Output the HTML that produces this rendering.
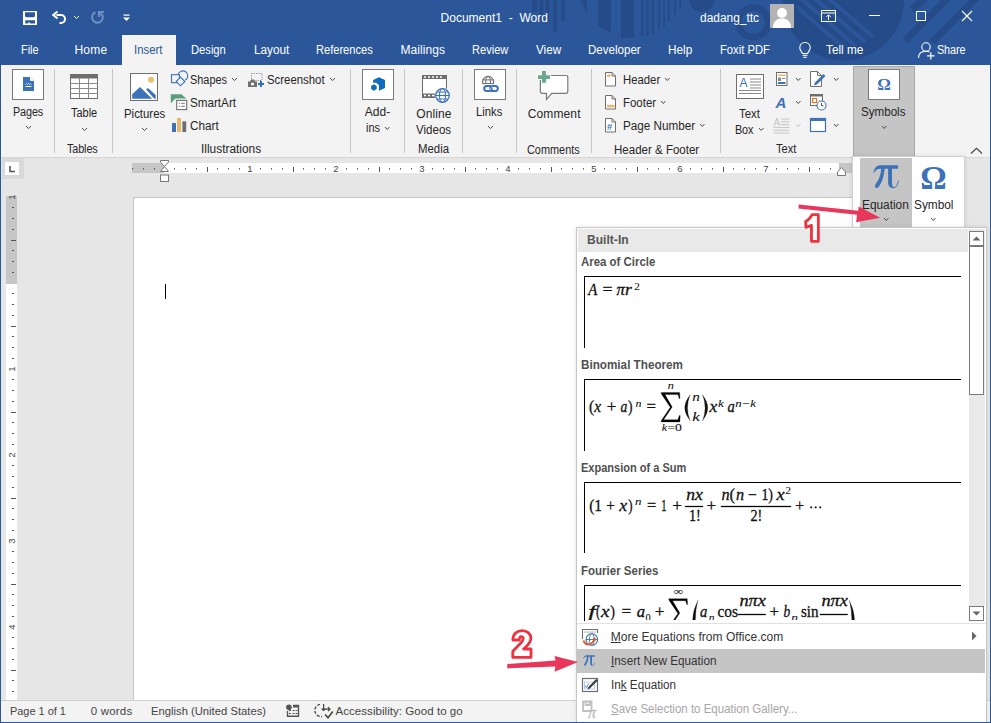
<!DOCTYPE html><html><head><meta charset="utf-8"><style>
html,body{margin:0;padding:0;}
body{width:991px;height:723px;overflow:hidden;position:relative;background:#e6e6e6;font-family:"Liberation Sans",sans-serif;}
.t{position:absolute;white-space:nowrap;font-family:"Liberation Sans",sans-serif;}
svg{overflow:visible}
u{text-decoration:underline;text-underline-offset:1px}
</style></head><body>
<div style="position:absolute;left:0px;top:0px;width:991px;height:65px;background:#2b579a"></div>
<svg style="position:absolute;left:0px;top:0px;" width="991" height="65" viewBox="0 0 991 65">
<g fill="#254c89">
<rect x="532.3" y="0" width="5" height="12"/><rect x="539.4" y="0" width="4" height="22"/><rect x="545.4" y="0" width="4" height="22"/><rect x="553" y="0" width="4" height="32"/>
<rect x="561" y="0" width="4" height="21"/>
<polygon points="580,0 587,0 587,13"/>
<polygon points="598,0 611,0 611,33 598,26"/>
<rect x="621" y="0" width="13" height="38"/>
<rect x="641" y="0" width="2.5" height="37"/>
<rect x="646" y="0" width="2.5" height="36"/>
<rect x="652" y="0" width="2" height="34"/>
<rect x="658" y="0" width="2" height="31"/>
<rect x="663" y="0" width="2" height="27"/>
<rect x="668" y="0" width="2" height="22"/>
<rect x="674" y="0" width="2" height="15"/>
<rect x="679" y="0" width="2" height="9"/><circle cx="702" cy="-1" r="13"/>
</g>
<g fill="none" stroke="#254c89">

<circle cx="753.3" cy="22.4" r="14.8" stroke-width="6.7"/>
</g>
<defs><clipPath id="uc"><circle cx="843.5" cy="0" r="47"/></clipPath></defs>
<circle cx="843.5" cy="0" r="60.5" fill="#254c89"/>
<g clip-path="url(#uc)" stroke="#2b579a" stroke-width="3.6">
<line x1="785" y1="-3" x2="858" y2="60"/>
<line x1="799" y1="-3" x2="872" y2="60"/>
<line x1="813" y1="-3" x2="886" y2="60"/>
<line x1="827" y1="-3" x2="900" y2="60"/>
</g>
<g stroke="#254c89" stroke-width="7">
<line x1="927" y1="-4" x2="912" y2="10"/>
<line x1="950" y1="-4" x2="905" y2="41"/>
<line x1="978" y1="-4" x2="932" y2="42"/>
</g>
</svg>
<div style="position:absolute;left:122px;top:35px;width:54px;height:30px;background:#f3f3f3"></div>
<div style="position:absolute;left:0px;top:65px;width:991px;height:92px;background:#f3f3f3"></div>
<div style="position:absolute;left:0px;top:157px;width:991px;height:1px;background:#d6d6d6"></div>
<div style="position:absolute;left:0px;top:158px;width:991px;height:542px;background:#e6e6e6"></div>
<div style="position:absolute;left:0px;top:700px;width:991px;height:1px;background:#cfcfcf"></div>
<div style="position:absolute;left:0px;top:701px;width:991px;height:22px;background:#f3f3f3"></div>
<svg style="position:absolute;left:22px;top:10px;" width="16" height="16" viewBox="0 0 16 16"><path fill-rule="evenodd" fill="#fff" d="M1,1 H15 V15 H1 Z M3,2.3 V6.3 L4,7.3 H12 L13,6.3 V2.3 Z M3.3,10.2 V13.6 H6 V12.5 H8 V13.6 H13 V10.2 Z"/></svg>
<svg style="position:absolute;left:51px;top:10px;" width="17" height="16" viewBox="0 0 17 16"><path d="M5.5,5 H10 A4,4 0 0 1 10,13 H8.5" fill="none" stroke="#fff" stroke-width="2"/><path d="M6.5,1.5 L2.3,5 L6.5,8.5" fill="none" stroke="#fff" stroke-width="2.1"/></svg>
<svg style="position:absolute;left:72.5px;top:15.0px;" width="7" height="4.6" viewBox="0 0 7 4.6"><polyline points="1,1 3.5,3.6 6,1" fill="none" stroke="#fff" stroke-width="0.95"/></svg>
<svg style="position:absolute;left:89px;top:10px;" width="17" height="16" viewBox="0 0 17 16"><path d="M6.6,2.2 A5.4,5.4 0 1 0 13.4,5.2" fill="none" stroke="#6f8fc2" stroke-width="2"/><path d="M15,2 H9.9 V7 M10,2 L13.8,6" fill="none" stroke="#6f8fc2" stroke-width="2"/></svg>
<svg style="position:absolute;left:122px;top:13px;" width="9" height="10" viewBox="0 0 9 10"><rect x="1.5" y="1.5" width="6" height="1.2" fill="#fff"/><polygon points="1,4.5 8,4.5 4.5,8" fill="#fff"/></svg>
<div class="t" style="left:440.5px;top:11.5px;font-size:12px;line-height:13.80px;letter-spacing:0.020px;color:#fff;transform:scaleX(1.0000);transform-origin:0 0;">Document1&nbsp; -&nbsp; Word</div>
<div class="t" style="left:700.0px;top:11.5px;font-size:12px;line-height:13.80px;letter-spacing:0.000px;color:#fff;transform:scaleX(0.9935);transform-origin:0 0;">dadang_ttc</div>
<svg style="position:absolute;left:770px;top:4px;" width="24" height="24" viewBox="0 0 24 24"><rect width="24" height="24" fill="#b3b3b3"/><circle cx="12" cy="9" r="5" fill="#fff"/><path d="M3,24 C3,17 7,14.5 12,14.5 C17,14.5 21,17 21,24 Z" fill="#fff"/></svg>
<svg style="position:absolute;left:821px;top:10px;" width="16" height="13" viewBox="0 0 16 13"><rect x="0.5" y="0.5" width="14" height="11" fill="none" stroke="#fff" stroke-width="1"/><line x1="0.5" y1="3" x2="14.5" y2="3" stroke="#fff"/><path d="M7.5,10 V5 M5.3,7 L7.5,4.8 L9.7,7" fill="none" stroke="#fff" stroke-width="1"/></svg>
<div style="position:absolute;left:869px;top:15px;width:11px;height:1px;background:#fff"></div>
<div style="position:absolute;left:916px;top:11px;width:10px;height:10px;border:1px solid #fff;box-sizing:border-box"></div>
<svg style="position:absolute;left:961px;top:10px;" width="12" height="12" viewBox="0 0 12 12"><path d="M1,1 L11,11 M11,1 L1,11" stroke="#fff" stroke-width="1.1"/></svg>
<div class="t" style="left:21.4px;top:43.9px;font-size:12px;line-height:13.80px;letter-spacing:0.000px;color:#fff;transform:scaleX(0.9102);transform-origin:0 0;">File</div>
<div class="t" style="left:74.4px;top:43.9px;font-size:12px;line-height:13.80px;letter-spacing:0.263px;color:#fff;transform:scaleX(1.0000);transform-origin:0 0;">Home</div>
<div class="t" style="left:190.6px;top:43.9px;font-size:12px;line-height:13.80px;letter-spacing:0.000px;color:#fff;transform:scaleX(0.9316);transform-origin:0 0;">Design</div>
<div class="t" style="left:253.6px;top:43.9px;font-size:12px;line-height:13.80px;letter-spacing:0.000px;color:#fff;transform:scaleX(0.9825);transform-origin:0 0;">Layout</div>
<div class="t" style="left:316.2px;top:43.9px;font-size:12px;line-height:13.80px;letter-spacing:0.000px;color:#fff;transform:scaleX(0.9240);transform-origin:0 0;">References</div>
<div class="t" style="left:400.4px;top:43.9px;font-size:12px;line-height:13.80px;letter-spacing:0.083px;color:#fff;transform:scaleX(1.0000);transform-origin:0 0;">Mailings</div>
<div class="t" style="left:472.1px;top:43.9px;font-size:12px;line-height:13.80px;letter-spacing:0.000px;color:#fff;transform:scaleX(0.9226);transform-origin:0 0;">Review</div>
<div class="t" style="left:535.7px;top:43.9px;font-size:12px;line-height:13.80px;letter-spacing:0.000px;color:#fff;transform:scaleX(0.9731);transform-origin:0 0;">View</div>
<div class="t" style="left:588.0px;top:43.9px;font-size:12px;line-height:13.80px;letter-spacing:0.000px;color:#fff;transform:scaleX(0.9634);transform-origin:0 0;">Developer</div>
<div class="t" style="left:668.3px;top:43.9px;font-size:12px;line-height:13.80px;letter-spacing:0.000px;color:#fff;transform:scaleX(0.9805);transform-origin:0 0;">Help</div>
<div class="t" style="left:720.0px;top:43.9px;font-size:12px;line-height:13.80px;letter-spacing:0.000px;color:#fff;transform:scaleX(0.9355);transform-origin:0 0;">Foxit PDF</div>
<div class="t" style="left:825.7px;top:43.9px;font-size:12px;line-height:13.80px;letter-spacing:0.000px;color:#fff;transform:scaleX(0.9813);transform-origin:0 0;">Tell me</div>
<div class="t" style="left:937.3px;top:43.9px;font-size:12px;line-height:13.80px;letter-spacing:-0.089px;color:#fff;transform:scaleX(0.9000);transform-origin:0 0;">Share</div>
<div class="t" style="left:134.2px;top:43.9px;font-size:12px;line-height:13.80px;letter-spacing:0.000px;color:#2b579a;transform:scaleX(0.9496);transform-origin:0 0;">Insert</div>
<svg style="position:absolute;left:798px;top:41px;" width="14" height="18" viewBox="0 0 14 18"><path d="M7,1.5 C3.8,1.5 1.8,4 1.8,6.8 C1.8,9.3 3.6,10.6 4.4,12.5 L9.6,12.5 C10.4,10.6 12.2,9.3 12.2,6.8 C12.2,4 10.2,1.5 7,1.5 Z" fill="none" stroke="#fff" stroke-width="1.1"/><line x1="4.6" y1="14.3" x2="9.4" y2="14.3" stroke="#fff" stroke-width="1.1"/><line x1="5.3" y1="16.3" x2="8.7" y2="16.3" stroke="#fff" stroke-width="1.1"/></svg>
<svg style="position:absolute;left:917px;top:41px;" width="18" height="18" viewBox="0 0 18 18"><circle cx="9" cy="6" r="4.2" fill="none" stroke="#fff" stroke-width="1.1"/><path d="M1.5,17 C1.5,12.5 4.5,10.3 9,10.3 C10.5,10.3 11.5,10.6 12.5,11.1" fill="none" stroke="#fff" stroke-width="1.1"/><path d="M13.8,11.2 V18.6 M10.1,14.9 H17.5" stroke="#fff" stroke-width="1.2"/></svg>
<div style="position:absolute;left:54px;top:69px;width:1px;height:84px;background:#c6c6c6"></div>
<div style="position:absolute;left:112px;top:69px;width:1px;height:84px;background:#c6c6c6"></div>
<div style="position:absolute;left:350px;top:69px;width:1px;height:84px;background:#c6c6c6"></div>
<div style="position:absolute;left:404px;top:69px;width:1px;height:84px;background:#c6c6c6"></div>
<div style="position:absolute;left:462px;top:69px;width:1px;height:84px;background:#c6c6c6"></div>
<div style="position:absolute;left:516px;top:69px;width:1px;height:84px;background:#c6c6c6"></div>
<div style="position:absolute;left:591px;top:69px;width:1px;height:84px;background:#c6c6c6"></div>
<div style="position:absolute;left:720px;top:69px;width:1px;height:84px;background:#c6c6c6"></div>
<div style="position:absolute;left:12px;top:69px;width:32px;height:31px;background:#fff;border:1px solid #7a7a7a;box-sizing:border-box"></div>
<svg style="position:absolute;left:23px;top:77px;" width="12" height="15" viewBox="0 0 12 15"><path d="M0,0 H7.5 L11,3.5 V14 H0 Z" fill="#3d72b8"/><path d="M7.5,0 V3.5 H11" fill="#fff" stroke="#fff" stroke-width=".8"/><path d="M2.5,7.5 L3.5,6.5 L4.5,7.5 L5.5,6.5 L6.5,7.5 L7.5,6.5 L8.5,7.5" fill="none" stroke="#fff" stroke-width=".8"/><rect x="2.5" y="9" width="6" height="1" fill="#fff"/></svg>
<div class="t" style="left:12.6px;top:105.9px;font-size:12px;line-height:13.80px;letter-spacing:-0.118px;color:#262626;transform:scaleX(0.9000);transform-origin:0 0;">Pages</div>
<svg style="position:absolute;left:24.7px;top:125.2px;" width="7" height="4.6" viewBox="0 0 7 4.6"><polyline points="1,1 3.5,3.6 6,1" fill="none" stroke="#444" stroke-width="0.95"/></svg>
<svg style="position:absolute;left:70px;top:74px;" width="28" height="25" viewBox="0 0 28 25"><rect x="0.5" y="0.5" width="27" height="24" fill="#fff" stroke="#6e6e6e"/><rect x="0" y="0" width="28" height="4.5" fill="#6e6e6e"/><g stroke="#8a8a8a" stroke-width="1"><line x1="9.5" y1="4" x2="9.5" y2="24"/><line x1="18.5" y1="4" x2="18.5" y2="24"/><line x1="0" y1="9.5" x2="28" y2="9.5"/><line x1="0" y1="14.5" x2="28" y2="14.5"/><line x1="0" y1="19.5" x2="28" y2="19.5"/></g></svg>
<div class="t" style="left:70.7px;top:107.4px;font-size:12px;line-height:13.80px;letter-spacing:0.000px;color:#262626;transform:scaleX(0.9133);transform-origin:0 0;">Table</div>
<svg style="position:absolute;left:80.5px;top:126.89999999999999px;" width="7" height="4.6" viewBox="0 0 7 4.6"><polyline points="1,1 3.5,3.6 6,1" fill="none" stroke="#444" stroke-width="0.95"/></svg>
<div class="t" style="left:67.3px;top:143.0px;font-size:12px;line-height:13.80px;letter-spacing:-0.115px;color:#262626;transform:scaleX(0.9000);transform-origin:0 0;">Tables</div>
<div style="position:absolute;left:130px;top:73px;width:28px;height:28px;background:#fff;border:1px solid #6e6e6e;box-sizing:border-box"></div>
<svg style="position:absolute;left:130px;top:73px;" width="28" height="28" viewBox="0 0 28 28"><circle cx="21" cy="6.8" r="3" fill="#e8c070"/><path d="M2.2,21.2 L10,13.9 L22.1,25.7 H2.2 Z" fill="#3d72b8"/><path d="M16.1,16.4 L17.9,15 L25.7,22.1 V25.7 H24.3 Z" fill="#3d72b8"/></svg>
<div class="t" style="left:123.5px;top:107.8px;font-size:12px;line-height:13.80px;letter-spacing:0.000px;color:#262626;transform:scaleX(0.9504);transform-origin:0 0;">Pictures</div>
<svg style="position:absolute;left:140.7px;top:127.1px;" width="7" height="4.6" viewBox="0 0 7 4.6"><polyline points="1,1 3.5,3.6 6,1" fill="none" stroke="#444" stroke-width="0.95"/></svg>
<svg style="position:absolute;left:170px;top:69px;" width="19" height="18" viewBox="0 0 19 18"><rect x="1.5" y="5.7" width="8" height="8" fill="none" stroke="#3d72b8" stroke-width="1.1"/><path d="M8,6 A4.9,4.9 0 1 1 15.3,11" fill="none" stroke="#3d72b8" stroke-width="1.1"/><path d="M10.5,8.1 L14.9,12.5 L10.5,16.8 L6.2,12.5 Z" fill="#f3f3f3" stroke="#3d72b8" stroke-width="1.1"/></svg>
<div class="t" style="left:190.0px;top:74.4px;font-size:12px;line-height:13.80px;letter-spacing:0.000px;color:#262626;transform:scaleX(0.9091);transform-origin:0 0;">Shapes</div>
<svg style="position:absolute;left:230.5px;top:77.0px;" width="7" height="4.6" viewBox="0 0 7 4.6"><polyline points="1,1 3.5,3.6 6,1" fill="none" stroke="#444" stroke-width="0.95"/></svg>
<svg style="position:absolute;left:170px;top:93px;" width="18" height="18" viewBox="0 0 18 18"><path d="M0.8,1.2 H11.5 L16.3,5.4 H5.5 L0.8,10.3 Z" fill="#5a9e80"/><rect x="6.7" y="7.4" width="10" height="9.2" fill="#fff" stroke="#6e6e6e" stroke-width="1.1"/><g fill="#7a7a7a"><rect x="8.8" y="9.8" width="1.2" height="1"/><rect x="11" y="9.8" width="3.8" height="1"/><rect x="8.8" y="12.8" width="1.2" height="1"/><rect x="11" y="12.8" width="3.8" height="1"/></g></svg>
<div class="t" style="left:190.0px;top:96.5px;font-size:12px;line-height:13.80px;letter-spacing:0.000px;color:#262626;transform:scaleX(0.9717);transform-origin:0 0;">SmartArt</div>
<svg style="position:absolute;left:171px;top:117px;" width="16" height="15" viewBox="0 0 16 15"><rect x="1" y="6" width="4" height="9" fill="#3d72b8"/><rect x="6" y="1" width="4" height="14" fill="#e8b86a"/><rect x="11.4" y="4.3" width="3.8" height="10.7" fill="#6e6e6e"/></svg>
<div class="t" style="left:190.0px;top:120.0px;font-size:12px;line-height:13.80px;letter-spacing:0.000px;color:#262626;transform:scaleX(0.9780);transform-origin:0 0;">Chart</div>
<svg style="position:absolute;left:247px;top:72px;" width="19" height="16" viewBox="0 0 19 16"><rect x="4.5" y="1.5" width="10.5" height="7" fill="none" stroke="#6e6e6e" stroke-dasharray="1,1.3" stroke-width="0.9"/><path d="M1,9.5 H3 L4,7.5 H7 L8,9.5 H10 V15 H1 Z" fill="#6e6e6e"/><circle cx="5.5" cy="12" r="1.6" fill="#fff"/><path d="M14,9 V15 M11,12 H17" stroke="#2f6fc0" stroke-width="2"/></svg>
<div class="t" style="left:267.2px;top:73.7px;font-size:12px;line-height:13.80px;letter-spacing:0.000px;color:#262626;transform:scaleX(0.9489);transform-origin:0 0;">Screenshot</div>
<svg style="position:absolute;left:328.5px;top:77.0px;" width="7" height="4.6" viewBox="0 0 7 4.6"><polyline points="1,1 3.5,3.6 6,1" fill="none" stroke="#444" stroke-width="0.95"/></svg>
<div class="t" style="left:201.4px;top:142.9px;font-size:12px;line-height:13.80px;letter-spacing:0.000px;color:#262626;transform:scaleX(0.9902);transform-origin:0 0;">Illustrations</div>
<div style="position:absolute;left:362px;top:69px;width:32px;height:31px;background:#fff;border:1px solid #7a7a7a;box-sizing:border-box"></div>
<svg style="position:absolute;left:369px;top:76px;" width="17" height="16" viewBox="0 0 17 16"><path d="M10,1.2 L16,4 V12 L10,14.7 V9 L7.2,6.7 H4.1 V4 Z" fill="#0f6cbd"/><polygon points="4.9,8.3 7.7,9.9 7.7,13.1 4.9,14.7 2.1,13.1 2.1,9.9" fill="#0f6cbd"/></svg>
<div class="t" style="left:364.7px;top:106.0px;font-size:12px;line-height:13.80px;letter-spacing:0.050px;color:#262626;transform:scaleX(1.0000);transform-origin:0 0;">Add-</div>
<div class="t" style="left:366.0px;top:121.8px;font-size:12px;line-height:13.80px;letter-spacing:0.000px;color:#262626;transform:scaleX(0.9126);transform-origin:0 0;">ins</div>
<svg style="position:absolute;left:383.75px;top:125.55px;" width="6.5" height="4.5" viewBox="0 0 6.5 4.5"><polyline points="1,1 3.25,3.5 5.5,1" fill="none" stroke="#444" stroke-width="0.95"/></svg>
<svg style="position:absolute;left:420px;top:73px;" width="33" height="32" viewBox="0 0 33 32"><rect x="2.5" y="2.5" width="24" height="22" fill="#fff" stroke="#6e6e6e"/><g fill="#6e6e6e"><rect x="2" y="2" width="25" height="4"/><rect x="2" y="20.5" width="25" height="4"/></g><g fill="#fff"><rect x="4" y="3.3" width="2" height="1.5"/><rect x="8" y="3.3" width="2" height="1.5"/><rect x="12" y="3.3" width="2" height="1.5"/><rect x="16" y="3.3" width="2" height="1.5"/><rect x="20" y="3.3" width="2" height="1.5"/><rect x="4" y="21.8" width="2" height="1.5"/><rect x="8" y="21.8" width="2" height="1.5"/><rect x="12" y="21.8" width="2" height="1.5"/></g><circle cx="22.5" cy="22.5" r="8" fill="#fff"/><circle cx="22.5" cy="22.5" r="6.8" fill="none" stroke="#3d72b8" stroke-width="1.3"/><ellipse cx="22.5" cy="22.5" rx="3" ry="6.8" fill="none" stroke="#3d72b8" stroke-width="1.1"/><line x1="15.7" y1="22.5" x2="29.3" y2="22.5" stroke="#3d72b8" stroke-width="1.1"/><line x1="17" y1="19" x2="28" y2="19" stroke="#3d72b8" stroke-width="1"/><line x1="17" y1="26" x2="28" y2="26" stroke="#3d72b8" stroke-width="1"/></svg>
<div class="t" style="left:416.3px;top:108.0px;font-size:12px;line-height:13.80px;letter-spacing:0.082px;color:#262626;transform:scaleX(1.0000);transform-origin:0 0;">Online</div>
<div class="t" style="left:416.3px;top:123.7px;font-size:12px;line-height:13.80px;letter-spacing:0.000px;color:#262626;transform:scaleX(0.9623);transform-origin:0 0;">Videos</div>
<div class="t" style="left:417.7px;top:143.0px;font-size:12px;line-height:13.80px;letter-spacing:0.000px;color:#262626;transform:scaleX(0.9484);transform-origin:0 0;">Media</div>
<div style="position:absolute;left:474px;top:69px;width:32px;height:31px;background:#fff;border:1px solid #7a7a7a;box-sizing:border-box"></div>
<svg style="position:absolute;left:481px;top:75px;" width="19" height="18" viewBox="0 0 19 18"><circle cx="7.1" cy="7" r="5.6" fill="none" stroke="#6e6e6e" stroke-width="1.1"/><ellipse cx="7.1" cy="7" rx="2.4" ry="5.6" fill="none" stroke="#6e6e6e" stroke-width="1"/><line x1="1.5" y1="4.9" x2="12.7" y2="4.9" stroke="#6e6e6e"/><line x1="1.5" y1="8.4" x2="12.7" y2="8.4" stroke="#6e6e6e"/><rect x="1" y="9.3" width="17" height="9" fill="#fff"/><rect x="3.2" y="11" width="7.6" height="5" rx="2.5" fill="none" stroke="#3d72b8" stroke-width="2"/><rect x="9.2" y="11" width="7.6" height="5" rx="2.5" fill="none" stroke="#3d72b8" stroke-width="2"/><line x1="8.3" y1="15" x2="11.5" y2="12" stroke="#fff" stroke-width="0.8"/></svg>
<div class="t" style="left:476.4px;top:106.0px;font-size:12px;line-height:13.80px;letter-spacing:0.000px;color:#262626;transform:scaleX(0.9388);transform-origin:0 0;">Links</div>
<svg style="position:absolute;left:486.5px;top:125.0px;" width="7" height="4.6" viewBox="0 0 7 4.6"><polyline points="1,1 3.5,3.6 6,1" fill="none" stroke="#444" stroke-width="0.95"/></svg>
<svg style="position:absolute;left:536px;top:70px;" width="34" height="31" viewBox="0 0 34 31"><path d="M4.4,8 V21.3 Q4.4,23.3 6.4,23.3 H10.5 V29.4 L15.7,23.3 H29.8 Q31.8,23.3 31.8,21.3 V7.5 Q31.8,5.5 29.8,5.5 H6.4 Q4.4,5.5 4.4,7.5 Z" fill="#fff" stroke="#7a7a7a" stroke-width="1.2"/><path d="M6,1 H9.9 V5.2 H13.9 V8.9 H9.9 V12.8 H6 V8.9 H2 V5.2 H6 Z" fill="#67a88f" stroke="#fafafa" stroke-width="2" paint-order="stroke"/></svg>
<div class="t" style="left:527.7px;top:108.2px;font-size:12px;line-height:13.80px;letter-spacing:0.131px;color:#262626;transform:scaleX(1.0000);transform-origin:0 0;">Comment</div>
<div class="t" style="left:527.4px;top:143.5px;font-size:12px;line-height:13.80px;letter-spacing:0.000px;color:#262626;transform:scaleX(0.9084);transform-origin:0 0;">Comments</div>
<svg style="position:absolute;left:604px;top:72px;" width="13" height="15" viewBox="0 0 13 15"><path d="M1.5,0.5 H8 L11.5,4 V14 H1.5 Z" fill="#fff" stroke="#6e6e6e"/><path d="M8,0.5 V4 H11.5" fill="none" stroke="#6e6e6e"/><rect x="3" y="2.5" width="3.5" height="2.3" fill="#e8b86a"/></svg>
<div class="t" style="left:622.5px;top:74.2px;font-size:12px;line-height:13.80px;letter-spacing:0.000px;color:#262626;transform:scaleX(0.9451);transform-origin:0 0;">Header</div>
<svg style="position:absolute;left:664.05px;top:77.05px;" width="6.5" height="4.5" viewBox="0 0 6.5 4.5"><polyline points="1,1 3.25,3.5 5.5,1" fill="none" stroke="#444" stroke-width="0.95"/></svg>
<svg style="position:absolute;left:604px;top:95px;" width="13" height="15" viewBox="0 0 13 15"><path d="M1.5,0.5 H8 L11.5,4 V14 H1.5 Z" fill="#fff" stroke="#6e6e6e"/><path d="M8,0.5 V4 H11.5" fill="none" stroke="#6e6e6e"/><rect x="3" y="9.8" width="7.5" height="2.5" fill="#e8b86a"/></svg>
<div class="t" style="left:622.5px;top:96.8px;font-size:12px;line-height:13.80px;letter-spacing:0.000px;color:#262626;transform:scaleX(0.9544);transform-origin:0 0;">Footer</div>
<svg style="position:absolute;left:660.05px;top:100.05px;" width="6.5" height="4.5" viewBox="0 0 6.5 4.5"><polyline points="1,1 3.25,3.5 5.5,1" fill="none" stroke="#444" stroke-width="0.95"/></svg>
<svg style="position:absolute;left:604px;top:118px;" width="13" height="15" viewBox="0 0 13 15"><path d="M1.5,0.5 H8 L11.5,4 V14 H1.5 Z" fill="#fff" stroke="#6e6e6e"/><path d="M8,0.5 V4 H11.5" fill="none" stroke="#6e6e6e"/><text x="3" y="11.5" font-family="Liberation Sans" font-size="9.5" font-weight="bold" fill="#3d72b8">#</text></svg>
<div class="t" style="left:622.5px;top:119.5px;font-size:12px;line-height:13.80px;letter-spacing:0.000px;color:#262626;transform:scaleX(0.9738);transform-origin:0 0;">Page Number</div>
<svg style="position:absolute;left:698.95px;top:123.05px;" width="6.5" height="4.5" viewBox="0 0 6.5 4.5"><polyline points="1,1 3.25,3.5 5.5,1" fill="none" stroke="#444" stroke-width="0.95"/></svg>
<div class="t" style="left:613.5px;top:143.5px;font-size:12px;line-height:13.80px;letter-spacing:0.000px;color:#262626;transform:scaleX(0.9604);transform-origin:0 0;">Header &amp; Footer</div>
<svg style="position:absolute;left:735px;top:73px;" width="30" height="27" viewBox="0 0 30 27"><rect x="1.5" y="1.5" width="27" height="24" fill="#fff" stroke="#6e6e6e"/><text x="4.5" y="14" font-family="Liberation Sans" font-size="12" fill="#3d72b8">A</text><g stroke="#8a8a8a" stroke-width="1"><line x1="15" y1="6" x2="26" y2="6"/><line x1="15" y1="9" x2="26" y2="9"/><line x1="15" y1="12" x2="26" y2="12"/><line x1="15" y1="15" x2="26" y2="15"/><line x1="4" y1="17.5" x2="26" y2="17.5"/><line x1="4" y1="20.5" x2="26" y2="20.5"/></g></svg>
<div class="t" style="left:739.3px;top:107.7px;font-size:12px;line-height:13.80px;letter-spacing:0.000px;color:#262626;transform:scaleX(0.9451);transform-origin:0 0;">Text</div>
<div class="t" style="left:734.7px;top:124.1px;font-size:12px;line-height:13.80px;letter-spacing:-0.117px;color:#262626;transform:scaleX(0.9000);transform-origin:0 0;">Box</div>
<svg style="position:absolute;left:757.75px;top:127.15px;" width="6.5" height="4.5" viewBox="0 0 6.5 4.5"><polyline points="1,1 3.25,3.5 5.5,1" fill="none" stroke="#444" stroke-width="0.95"/></svg>
<svg style="position:absolute;left:775px;top:71px;" width="13" height="16" viewBox="0 0 13 16"><rect x="1.5" y="1.5" width="10.5" height="13" fill="#fff" stroke="#6e6e6e"/><rect x="3" y="3.5" width="7.5" height="1.5" fill="#e8b86a"/><rect x="3" y="6.5" width="3" height="3.5" fill="#8a8a8a"/><rect x="7" y="7" width="3.5" height="1" fill="#8a8a8a"/><rect x="3" y="11" width="7.5" height="2" fill="#3d72b8"/></svg>
<svg style="position:absolute;left:794.85px;top:76.85px;" width="6.5" height="4.5" viewBox="0 0 6.5 4.5"><polyline points="1,1 3.25,3.5 5.5,1" fill="none" stroke="#444" stroke-width="0.95"/></svg>
<svg style="position:absolute;left:775px;top:95px;" width="14" height="14" viewBox="0 0 14 14"><text x="0.5" y="12.5" font-family="Liberation Sans" font-size="15" font-weight="bold" font-style="italic" fill="#3d72b8">A</text></svg>
<svg style="position:absolute;left:794.85px;top:100.05px;" width="6.5" height="4.5" viewBox="0 0 6.5 4.5"><polyline points="1,1 3.25,3.5 5.5,1" fill="none" stroke="#444" stroke-width="0.95"/></svg>
<svg style="position:absolute;left:773px;top:116px;" width="18" height="18" viewBox="0 0 18 18"><text x="0.5" y="9.5" font-family="Liberation Sans" font-size="10" fill="#c4c4c4">A</text><g stroke="#c4c4c4" stroke-width="1"><line x1="8" y1="3" x2="16.5" y2="3"/><line x1="8" y1="5.8" x2="16.5" y2="5.8"/><line x1="8" y1="8.6" x2="16.5" y2="8.6"/><line x1="0.5" y1="11.4" x2="16.5" y2="11.4"/><line x1="0.5" y1="14.2" x2="16.5" y2="14.2"/><line x1="0.5" y1="17" x2="16.5" y2="17"/></g></svg>
<svg style="position:absolute;left:794.85px;top:122.95px;" width="6.5" height="4.5" viewBox="0 0 6.5 4.5"><polyline points="1,1 3.25,3.5 5.5,1" fill="none" stroke="#c4c4c4" stroke-width="0.95"/></svg>
<svg style="position:absolute;left:809px;top:70px;" width="18" height="18" viewBox="0 0 18 18"><path d="M1.5,1.5 H8.5 L12.5,5.5 V16.5 H1.5 Z" fill="#fff" stroke="#6e6e6e"/><path d="M8.5,1.5 V5.5 H12.5" fill="none" stroke="#6e6e6e"/><path d="M5,15.5 L6,12.5 L14.5,4 L16.5,6 L8,14.5 Z" fill="#3d72b8"/></svg>
<svg style="position:absolute;left:832.85px;top:76.85px;" width="6.5" height="4.5" viewBox="0 0 6.5 4.5"><polyline points="1,1 3.25,3.5 5.5,1" fill="none" stroke="#444" stroke-width="0.95"/></svg>
<svg style="position:absolute;left:809px;top:93px;" width="18" height="18" viewBox="0 0 18 18"><rect x="1.5" y="1.5" width="12" height="11" fill="#fff" stroke="#6e6e6e"/><rect x="1" y="1" width="13" height="2.5" fill="#6e6e6e"/><rect x="3.5" y="5.5" width="4" height="4" fill="none" stroke="#e07020" stroke-width="1.1"/><circle cx="12.5" cy="12.5" r="4.5" fill="#fff" stroke="#3d72b8" stroke-width="1.1"/><path d="M12.5,10 V12.8 H14.5" fill="none" stroke="#444" stroke-width=".9"/></svg>
<svg style="position:absolute;left:809px;top:117px;" width="18" height="16" viewBox="0 0 18 16"><rect x="1.5" y="1.5" width="15" height="13" fill="#fff" stroke="#3d72b8" stroke-width="1.2"/><rect x="1" y="1" width="16" height="3" fill="#3d72b8"/></svg>
<svg style="position:absolute;left:832.85px;top:123.25px;" width="6.5" height="4.5" viewBox="0 0 6.5 4.5"><polyline points="1,1 3.25,3.5 5.5,1" fill="none" stroke="#444" stroke-width="0.95"/></svg>
<div class="t" style="left:775.8px;top:143.4px;font-size:12px;line-height:13.80px;letter-spacing:0.000px;color:#262626;transform:scaleX(0.9179);transform-origin:0 0;">Text</div>
<div style="position:absolute;left:853px;top:66px;width:62px;height:92px;background:#c5c5c5;border:1px solid #a8a8a8;border-bottom:none;box-sizing:border-box"></div>
<div style="position:absolute;left:868px;top:69px;width:32px;height:31px;background:#fff;border:1px solid #7a7a7a;box-sizing:border-box"></div>
<svg style="position:absolute;left:868px;top:69px;" width="32" height="31" viewBox="0 0 32 31"><text x="16" y="20.5" text-anchor="middle" font-family="Liberation Serif" font-weight="bold" font-size="17" fill="#3d72b8">&#937;</text></svg>
<div class="t" style="left:861.2px;top:105.8px;font-size:12px;line-height:13.80px;letter-spacing:0.000px;color:#262626;transform:scaleX(0.9671);transform-origin:0 0;">Symbols</div>
<svg style="position:absolute;left:881.15px;top:124.85px;" width="6.5" height="4.5" viewBox="0 0 6.5 4.5"><polyline points="1,1 3.25,3.5 5.5,1" fill="none" stroke="#444" stroke-width="0.95"/></svg>
<svg style="position:absolute;left:970px;top:147px;" width="13" height="8" viewBox="0 0 13 8"><polyline points="1,6.5 6.5,1.3 12,6.5" fill="none" stroke="#444" stroke-width="1.1"/></svg>
<div style="position:absolute;left:2px;top:158px;width:22px;height:21px;background:#d9d9d9"></div>
<div style="position:absolute;left:5px;top:162px;width:14px;height:13px;background:#fff"></div>
<svg style="position:absolute;left:5px;top:162px;" width="14" height="13" viewBox="0 0 14 13"><path d="M5,4 V9.5 H10" fill="none" stroke="#555" stroke-width="1.6"/></svg>
<div style="position:absolute;left:132px;top:163px;width:32px;height:10px;background:#c6c6c6"></div>
<div style="position:absolute;left:164px;top:163px;width:675px;height:10px;background:#fff"></div>
<div style="position:absolute;left:839px;top:163px;width:14px;height:10px;background:#c6c6c6"></div>
<svg style="position:absolute;left:0px;top:0px;" width="991" height="190" viewBox="0 0 991 190"><rect x="132" y="168" width="1" height="1.5" fill="#555"/><rect x="143" y="168" width="1" height="1.5" fill="#555"/><rect x="154" y="168" width="1" height="1.5" fill="#555"/><rect x="174" y="168" width="1" height="1.5" fill="#555"/><rect x="185" y="168" width="1" height="1.5" fill="#555"/><rect x="196" y="168" width="1" height="1.5" fill="#555"/><rect x="207" y="167" width="1" height="5" fill="#555"/><rect x="217" y="168" width="1" height="1.5" fill="#555"/><rect x="228" y="168" width="1" height="1.5" fill="#555"/><rect x="239" y="168" width="1" height="1.5" fill="#555"/><text x="250.0" y="172" text-anchor="middle" font-family="Liberation Sans" font-size="9.5" fill="#444">1</text><rect x="260" y="168" width="1" height="1.5" fill="#555"/><rect x="271" y="168" width="1" height="1.5" fill="#555"/><rect x="282" y="168" width="1" height="1.5" fill="#555"/><rect x="293" y="167" width="1" height="5" fill="#555"/><rect x="303" y="168" width="1" height="1.5" fill="#555"/><rect x="314" y="168" width="1" height="1.5" fill="#555"/><rect x="325" y="168" width="1" height="1.5" fill="#555"/><text x="336.0" y="172" text-anchor="middle" font-family="Liberation Sans" font-size="9.5" fill="#444">2</text><rect x="346" y="168" width="1" height="1.5" fill="#555"/><rect x="357" y="168" width="1" height="1.5" fill="#555"/><rect x="368" y="168" width="1" height="1.5" fill="#555"/><rect x="379" y="167" width="1" height="5" fill="#555"/><rect x="389" y="168" width="1" height="1.5" fill="#555"/><rect x="400" y="168" width="1" height="1.5" fill="#555"/><rect x="411" y="168" width="1" height="1.5" fill="#555"/><text x="422.0" y="172" text-anchor="middle" font-family="Liberation Sans" font-size="9.5" fill="#444">3</text><rect x="432" y="168" width="1" height="1.5" fill="#555"/><rect x="443" y="168" width="1" height="1.5" fill="#555"/><rect x="454" y="168" width="1" height="1.5" fill="#555"/><rect x="465" y="167" width="1" height="5" fill="#555"/><rect x="475" y="168" width="1" height="1.5" fill="#555"/><rect x="486" y="168" width="1" height="1.5" fill="#555"/><rect x="497" y="168" width="1" height="1.5" fill="#555"/><text x="508.0" y="172" text-anchor="middle" font-family="Liberation Sans" font-size="9.5" fill="#444">4</text><rect x="518" y="168" width="1" height="1.5" fill="#555"/><rect x="529" y="168" width="1" height="1.5" fill="#555"/><rect x="540" y="168" width="1" height="1.5" fill="#555"/><rect x="551" y="167" width="1" height="5" fill="#555"/><rect x="561" y="168" width="1" height="1.5" fill="#555"/><rect x="572" y="168" width="1" height="1.5" fill="#555"/><rect x="583" y="168" width="1" height="1.5" fill="#555"/><text x="594.0" y="172" text-anchor="middle" font-family="Liberation Sans" font-size="9.5" fill="#444">5</text><rect x="604" y="168" width="1" height="1.5" fill="#555"/><rect x="615" y="168" width="1" height="1.5" fill="#555"/><rect x="626" y="168" width="1" height="1.5" fill="#555"/><rect x="637" y="167" width="1" height="5" fill="#555"/><rect x="647" y="168" width="1" height="1.5" fill="#555"/><rect x="658" y="168" width="1" height="1.5" fill="#555"/><rect x="669" y="168" width="1" height="1.5" fill="#555"/><text x="680.0" y="172" text-anchor="middle" font-family="Liberation Sans" font-size="9.5" fill="#444">6</text><rect x="690" y="168" width="1" height="1.5" fill="#555"/><rect x="701" y="168" width="1" height="1.5" fill="#555"/><rect x="712" y="168" width="1" height="1.5" fill="#555"/><rect x="723" y="167" width="1" height="5" fill="#555"/><rect x="733" y="168" width="1" height="1.5" fill="#555"/><rect x="744" y="168" width="1" height="1.5" fill="#555"/><rect x="755" y="168" width="1" height="1.5" fill="#555"/><text x="766.0" y="172" text-anchor="middle" font-family="Liberation Sans" font-size="9.5" fill="#444">7</text><rect x="776" y="168" width="1" height="1.5" fill="#555"/><rect x="787" y="168" width="1" height="1.5" fill="#555"/><rect x="798" y="168" width="1" height="1.5" fill="#555"/><rect x="809" y="167" width="1" height="5" fill="#555"/><rect x="819" y="168" width="1" height="1.5" fill="#555"/><rect x="830" y="168" width="1" height="1.5" fill="#555"/><rect x="841" y="168" width="1" height="1.5" fill="#555"/></svg>
<svg style="position:absolute;left:159px;top:159px;" width="11" height="24" viewBox="0 0 11 24"><path d="M1.5,1.5 H9.5 V3 L5.5,7.5 L1.5,3 Z" fill="#fff" stroke="#777"/><path d="M5.5,7.5 L9.5,12.5 H1.5 Z" fill="#fff" stroke="#777"/><rect x="1.5" y="16" width="8" height="6.5" fill="#fff" stroke="#777"/></svg>
<svg style="position:absolute;left:836px;top:166px;" width="11" height="10" viewBox="0 0 11 10"><path d="M5.5,1.5 L9.5,6 V9.5 H1.5 V6 Z" fill="#fff" stroke="#777"/></svg>
<div style="position:absolute;left:6px;top:196px;width:11px;height:88px;background:#c6c6c6"></div>
<div style="position:absolute;left:6px;top:284px;width:11px;height:416px;background:#fff"></div>
<svg style="position:absolute;left:0px;top:0px;" width="30" height="723" viewBox="0 0 30 723"><text transform="translate(15,197.0) rotate(-90)" text-anchor="middle" font-family="Liberation Sans" font-size="9.5" fill="#444">1</text><rect x="12" y="207" width="2" height="1" fill="#555"/><rect x="12" y="218" width="2" height="1" fill="#555"/><rect x="12" y="229" width="2" height="1" fill="#555"/><rect x="11" y="240" width="5" height="1" fill="#555"/><rect x="12" y="250" width="2" height="1" fill="#555"/><rect x="12" y="261" width="2" height="1" fill="#555"/><rect x="12" y="272" width="2" height="1" fill="#555"/><rect x="12" y="293" width="2" height="1" fill="#555"/><rect x="12" y="304" width="2" height="1" fill="#555"/><rect x="12" y="315" width="2" height="1" fill="#555"/><rect x="11" y="326" width="5" height="1" fill="#555"/><rect x="12" y="336" width="2" height="1" fill="#555"/><rect x="12" y="347" width="2" height="1" fill="#555"/><rect x="12" y="358" width="2" height="1" fill="#555"/><text transform="translate(15,369.0) rotate(-90)" text-anchor="middle" font-family="Liberation Sans" font-size="9.5" fill="#444">1</text><rect x="12" y="379" width="2" height="1" fill="#555"/><rect x="12" y="390" width="2" height="1" fill="#555"/><rect x="12" y="401" width="2" height="1" fill="#555"/><rect x="11" y="412" width="5" height="1" fill="#555"/><rect x="12" y="422" width="2" height="1" fill="#555"/><rect x="12" y="433" width="2" height="1" fill="#555"/><rect x="12" y="444" width="2" height="1" fill="#555"/><text transform="translate(15,455.0) rotate(-90)" text-anchor="middle" font-family="Liberation Sans" font-size="9.5" fill="#444">2</text><rect x="12" y="465" width="2" height="1" fill="#555"/><rect x="12" y="476" width="2" height="1" fill="#555"/><rect x="12" y="487" width="2" height="1" fill="#555"/><rect x="11" y="498" width="5" height="1" fill="#555"/><rect x="12" y="508" width="2" height="1" fill="#555"/><rect x="12" y="519" width="2" height="1" fill="#555"/><rect x="12" y="530" width="2" height="1" fill="#555"/><text transform="translate(15,541.0) rotate(-90)" text-anchor="middle" font-family="Liberation Sans" font-size="9.5" fill="#444">3</text><rect x="12" y="551" width="2" height="1" fill="#555"/><rect x="12" y="562" width="2" height="1" fill="#555"/><rect x="12" y="573" width="2" height="1" fill="#555"/><rect x="11" y="584" width="5" height="1" fill="#555"/><rect x="12" y="594" width="2" height="1" fill="#555"/><rect x="12" y="605" width="2" height="1" fill="#555"/><rect x="12" y="616" width="2" height="1" fill="#555"/><text transform="translate(15,627.0) rotate(-90)" text-anchor="middle" font-family="Liberation Sans" font-size="9.5" fill="#444">4</text><rect x="12" y="637" width="2" height="1" fill="#555"/><rect x="12" y="648" width="2" height="1" fill="#555"/><rect x="12" y="659" width="2" height="1" fill="#555"/><rect x="11" y="670" width="5" height="1" fill="#555"/><rect x="12" y="680" width="2" height="1" fill="#555"/><rect x="12" y="691" width="2" height="1" fill="#555"/></svg>
<div style="position:absolute;left:133px;top:197px;width:737px;height:503px;background:#fff;border-left:1px solid #c6c6c6;border-top:1px solid #c6c6c6;box-sizing:border-box"></div>
<div style="position:absolute;left:165px;top:284px;width:1px;height:15px;background:#000"></div>
<div style="position:absolute;left:852px;top:156px;width:113px;height:72px;background:#fff;border:1px solid #d0d0d0;box-sizing:border-box;box-shadow:0 0 5px rgba(0,0,0,0.10)"></div>
<div style="position:absolute;left:860px;top:158px;width:52px;height:70px;background:#c5c5c5"></div>
<svg style="position:absolute;left:866px;top:160px;" width="86" height="34" viewBox="0 0 86 34"><path d="M7.4,12.6 C8.5,8 10.5,5.2 14,5.2 H32.1 V8.7 H26 V23.4 C26,26 27,27 28.5,27 C30,27 31.2,24 32.1,20.4 L32.8,20.6 C32.2,25 30.5,28.2 27.5,28.2 C24,28.2 22.1,26 22.1,22 V8.7 H18.7 C18,16 16,22 13.3,26 C12.5,27.3 11.5,28 10.5,28 C9.5,28 9,27.2 9,26.2 C9,24.5 11,22.5 12.5,19.5 C14,16.5 15,12 15.2,8.7 H14.3 C11.3,8.7 9.5,10 8.2,12.8 Z" fill="#3d72b8"/><text x="67.4" y="28.6" text-anchor="middle" font-family="Liberation Serif" font-weight="bold" font-size="33" fill="#3d72b8">&#937;</text></svg>
<div class="t" style="left:862.0px;top:198.5px;font-size:12px;line-height:13.80px;letter-spacing:0.000px;color:#262626;transform:scaleX(0.9879);transform-origin:0 0;">Equation</div>
<div class="t" style="left:914.0px;top:198.5px;font-size:12px;line-height:13.80px;letter-spacing:0.000px;color:#262626;transform:scaleX(0.9871);transform-origin:0 0;">Symbol</div>
<svg style="position:absolute;left:882.55px;top:216.95px;" width="6.5" height="4.5" viewBox="0 0 6.5 4.5"><polyline points="1,1 3.25,3.5 5.5,1" fill="none" stroke="#444" stroke-width="0.95"/></svg>
<svg style="position:absolute;left:930.45px;top:216.95px;" width="6.5" height="4.5" viewBox="0 0 6.5 4.5"><polyline points="1,1 3.25,3.5 5.5,1" fill="none" stroke="#444" stroke-width="0.95"/></svg>
<div style="position:absolute;left:576px;top:227px;width:411px;height:496px;background:#fff;border:1px solid #c6c6c6;box-sizing:border-box;box-shadow:0 0 5px rgba(0,0,0,0.10)"></div>
<div style="position:absolute;left:578px;top:229px;width:390px;height:23px;background:#e9e9e9"></div>
<div class="t" style="left:587.0px;top:234.2px;font-size:12px;line-height:13.80px;letter-spacing:0.040px;color:#555;font-weight:bold;transform:scaleX(1.0000);transform-origin:0 0;">Built-In</div>
<div style="position:absolute;left:969px;top:229px;width:16px;height:377px;background:#e9e9e9"></div>
<div style="position:absolute;left:969px;top:231px;width:15px;height:15px;background:#fff;border:1px solid #7a7a7a;box-sizing:border-box"></div>
<svg style="position:absolute;left:969px;top:231px;" width="15" height="15" viewBox="0 0 15 15"><polygon points="3.5,9.5 7.5,5.5 11.5,9.5" fill="#666"/></svg>
<div style="position:absolute;left:969px;top:246px;width:15px;height:149px;background:#fff;border:1px solid #7a7a7a;box-sizing:border-box"></div>
<div style="position:absolute;left:969px;top:606px;width:15px;height:15px;background:#fff;border:1px solid #7a7a7a;box-sizing:border-box"></div>
<svg style="position:absolute;left:969px;top:606px;" width="15" height="15" viewBox="0 0 15 15"><polygon points="3.5,5.5 11.5,5.5 7.5,9.5" fill="#666"/></svg>
<div class="t" style="left:580.6px;top:255.8px;font-size:12px;line-height:13.80px;letter-spacing:0.000px;color:#505050;font-weight:bold;transform:scaleX(0.9535);transform-origin:0 0;">Area of Circle</div>
<div style="position:absolute;left:584px;top:276px;width:377px;height:1px;background:#000"></div>
<div style="position:absolute;left:584px;top:276px;width:1px;height:72px;background:#000"></div>
<div class="t" style="left:580.6px;top:358.6px;font-size:12px;line-height:13.80px;letter-spacing:0.000px;color:#505050;font-weight:bold;transform:scaleX(0.9744);transform-origin:0 0;">Binomial Theorem</div>
<div style="position:absolute;left:584px;top:379px;width:377px;height:1px;background:#000"></div>
<div style="position:absolute;left:584px;top:379px;width:1px;height:72px;background:#000"></div>
<div class="t" style="left:580.6px;top:462.0px;font-size:12px;line-height:13.80px;letter-spacing:0.000px;color:#505050;font-weight:bold;transform:scaleX(0.9190);transform-origin:0 0;">Expansion of a Sum</div>
<div style="position:absolute;left:584px;top:482px;width:377px;height:1px;background:#000"></div>
<div style="position:absolute;left:584px;top:482px;width:1px;height:71px;background:#000"></div>
<div class="t" style="left:580.6px;top:565.2px;font-size:12px;line-height:13.80px;letter-spacing:0.000px;color:#505050;font-weight:bold;transform:scaleX(0.9591);transform-origin:0 0;">Fourier Series</div>
<div style="position:absolute;left:584px;top:585px;width:377px;height:1px;background:#000"></div>
<div style="position:absolute;left:584px;top:585px;width:1px;height:36px;background:#000"></div>
<svg style="position:absolute;left:0;top:0" width="991" height="723"><defs><clipPath id="gc"><rect x="577" y="229" width="391" height="391"/></clipPath></defs><g clip-path="url(#gc)" font-family="Liberation Serif" fill="#111" stroke="#111" stroke-width="0.3"><text x="588.2" y="294.9" font-size="16" style="font-style:italic;" textLength="9.0" lengthAdjust="spacingAndGlyphs">A</text><text x="602.5" y="294.6" font-size="16" style="" textLength="10.0" lengthAdjust="spacingAndGlyphs">=</text><text x="616.5" y="294.9" font-size="16" style="font-style:italic;" textLength="8.4" lengthAdjust="spacingAndGlyphs">&#960;</text><text x="625.0" y="294.9" font-size="16" style="font-style:italic;" textLength="6.8" lengthAdjust="spacingAndGlyphs">r</text><text x="634.3" y="289.9" font-size="11" stroke-width="0.08" style="" textLength="5.6" lengthAdjust="spacingAndGlyphs">2</text><text x="589.0" y="411.8" font-size="16" style="" textLength="5.1" lengthAdjust="spacingAndGlyphs">(</text><text x="594.3" y="411.8" font-size="16" style="font-style:italic;" textLength="6.8" lengthAdjust="spacingAndGlyphs">x</text><text x="606.7" y="411.8" font-size="16" style="" textLength="9.6" lengthAdjust="spacingAndGlyphs">+</text><text x="620.6" y="411.8" font-size="16" style="font-style:italic;" textLength="6.8" lengthAdjust="spacingAndGlyphs">a</text><text x="627.9" y="411.8" font-size="16" style="" textLength="4.5" lengthAdjust="spacingAndGlyphs">)</text><text x="635.5" y="406.7" font-size="11" stroke-width="0.08" style="font-style:italic;" textLength="6.0" lengthAdjust="spacingAndGlyphs">n</text><text x="646.6" y="411.5" font-size="16" style="" textLength="9.5" lengthAdjust="spacingAndGlyphs">=</text><polygon points="661.2,392.6 679.6,392.6 680.0,398.5 679.2,398.5 678.0,394.6 665.0,394.6 672.2,407.0 663.6,419.8 677.8,419.8 679.3,415.5 680.2,415.5 679.9,421.9 661.2,421.9 661.2,420.8 670.3,407.3 661.2,393.8" fill="#000"/><text x="667.7" y="388.6" font-size="11" stroke-width="0.08" style="font-style:italic;" textLength="6.1" lengthAdjust="spacingAndGlyphs">n</text><text x="661.7" y="430.5" font-size="11" stroke-width="0.08" style="font-style:italic;" textLength="5.3" lengthAdjust="spacingAndGlyphs">k</text><text x="667.3" y="430.5" font-size="11" stroke-width="0.08" style="" textLength="14.6" lengthAdjust="spacingAndGlyphs">=0</text><path d="M690.2,395 Q679.37,407.75 690.2,420.5 L689.9000000000001,420.6 Q685.07,407.75 689.9000000000001,394.9 Z" fill="#111"/><text x="692.2" y="401.2" font-size="12.5" stroke-width="0.08" style="font-style:italic;" textLength="7.6" lengthAdjust="spacingAndGlyphs">n</text><text x="692.2" y="421.0" font-size="12.5" stroke-width="0.08" style="font-style:italic;" textLength="7.6" lengthAdjust="spacingAndGlyphs">k</text><path d="M702.5,395 Q712.95,407.75 702.5,420.5 L702.8,420.6 Q707.45,407.75 702.8,394.9 Z" fill="#111"/><text x="709.4" y="411.8" font-size="16" style="font-style:italic;" textLength="7.7" lengthAdjust="spacingAndGlyphs">x</text><text x="718.0" y="406.6" font-size="11" stroke-width="0.08" style="font-style:italic;" textLength="5.8" lengthAdjust="spacingAndGlyphs">k</text><text x="727.6" y="411.8" font-size="16" style="font-style:italic;" textLength="7.3" lengthAdjust="spacingAndGlyphs">a</text><text x="735.3" y="406.6" font-size="11" stroke-width="0.08" style="font-style:italic;" textLength="20.7" lengthAdjust="spacingAndGlyphs">n&#8722;k</text><text x="589.2" y="511.3" font-size="16" style="" textLength="12.8" lengthAdjust="spacingAndGlyphs">(1</text><text x="606.2" y="511.3" font-size="16" style="" textLength="8.6" lengthAdjust="spacingAndGlyphs">+</text><text x="619.3" y="511.3" font-size="16" style="font-style:italic;" textLength="7.9" lengthAdjust="spacingAndGlyphs">x</text><text x="628.2" y="511.3" font-size="16" style="" textLength="4.3" lengthAdjust="spacingAndGlyphs">)</text><text x="635.1" y="504.5" font-size="11" stroke-width="0.08" style="font-style:italic;" textLength="6.5" lengthAdjust="spacingAndGlyphs">n</text><text x="646.9" y="511.0" font-size="16" style="" textLength="9.2" lengthAdjust="spacingAndGlyphs">=</text><text x="661.3" y="511.3" font-size="16" style="" textLength="5.3" lengthAdjust="spacingAndGlyphs">1</text><text x="672.3" y="511.3" font-size="16" style="" textLength="9.7" lengthAdjust="spacingAndGlyphs">+</text><text x="686.2" y="500.3" font-size="16" style="font-style:italic;" textLength="16.6" lengthAdjust="spacingAndGlyphs">nx</text><text x="688.9" y="520.8" font-size="16" style="" textLength="11.8" lengthAdjust="spacingAndGlyphs">1!</text><text x="706.6" y="511.3" font-size="16" style="" textLength="9.6" lengthAdjust="spacingAndGlyphs">+</text><text x="721.4" y="500.1" font-size="16" style="font-style:italic;" textLength="8.1" lengthAdjust="spacingAndGlyphs">n</text><text x="729.5" y="500.1" font-size="16" style="" textLength="5.5" lengthAdjust="spacingAndGlyphs">(</text><text x="735.9" y="500.1" font-size="16" style="font-style:italic;" textLength="8.1" lengthAdjust="spacingAndGlyphs">n</text><text x="748.0" y="500.1" font-size="16" style="" textLength="8.8" lengthAdjust="spacingAndGlyphs">&#8722;</text><text x="761.4" y="500.1" font-size="16" style="" textLength="11.6" lengthAdjust="spacingAndGlyphs">1)</text><text x="776.5" y="500.1" font-size="16" style="font-style:italic;" textLength="8.1" lengthAdjust="spacingAndGlyphs">x</text><text x="785.2" y="494.3" font-size="11" stroke-width="0.08" style="" textLength="5.8" lengthAdjust="spacingAndGlyphs">2</text><text x="750.5" y="520.8" font-size="16" style="" textLength="11.8" lengthAdjust="spacingAndGlyphs">2!</text><text x="795.3" y="511.3" font-size="16" style="" textLength="8.8" lengthAdjust="spacingAndGlyphs">+</text><circle cx="811.2" cy="507.3" r="0.9" fill="#111"/><circle cx="815.7" cy="507.3" r="0.9" fill="#111"/><circle cx="820.2" cy="507.3" r="0.9" fill="#111"/><rect x="685" y="506" width="18" height="1" fill="#000"/><rect x="721" y="506" width="70" height="1" fill="#000"/><text x="588.2" y="617.3" font-size="16" style="font-style:italic;" textLength="7.3" lengthAdjust="spacingAndGlyphs">f</text><text x="596.1" y="617.3" font-size="16" style="" textLength="4.2" lengthAdjust="spacingAndGlyphs">(</text><text x="601.0" y="617.3" font-size="16" style="font-style:italic;" textLength="8.5" lengthAdjust="spacingAndGlyphs">x</text><text x="610.2" y="617.3" font-size="16" style="" textLength="4.7" lengthAdjust="spacingAndGlyphs">)</text><text x="621.5" y="617.0" font-size="16" style="" textLength="9.7" lengthAdjust="spacingAndGlyphs">=</text><text x="636.7" y="617.3" font-size="16" style="font-style:italic;" textLength="8.3" lengthAdjust="spacingAndGlyphs">a</text><text x="645.4" y="620.5" font-size="11" stroke-width="0.08" style="" textLength="5.2" lengthAdjust="spacingAndGlyphs">0</text><text x="654.8" y="617.3" font-size="16" style="" textLength="9.7" lengthAdjust="spacingAndGlyphs">+</text><text x="673.6" y="594.5" font-size="11" stroke-width="0.08" style="" textLength="9.7" lengthAdjust="spacingAndGlyphs">&#8734;</text><polygon points="668.8,598.7 687.2,598.7 687.6,604.6 686.8,604.6 685.6,600.7 672.6,600.7 679.8,613.1 671.2,625.9 685.4,625.9 686.9,621.6 687.8,621.6 687.5,628.0 668.8,628.0 668.8,626.9 677.9,613.4 668.8,599.9" fill="#000"/><path d="M698,600.7 Q687.3599999999999,620.35 698,640 L697.7,640.1 Q692.96,620.35 697.7,600.6 Z" fill="#111"/><text x="700.0" y="617.3" font-size="16" style="font-style:italic;" textLength="7.3" lengthAdjust="spacingAndGlyphs">a</text><text x="708.8" y="620.8" font-size="11" stroke-width="0.08" style="font-style:italic;" textLength="5.8" lengthAdjust="spacingAndGlyphs">n</text><text x="717.5" y="617.3" font-size="16" style="" textLength="20.5" lengthAdjust="spacingAndGlyphs">cos</text><text x="739.5" y="606.3" font-size="16" style="font-style:italic;" textLength="26.3" lengthAdjust="spacingAndGlyphs">n&#960;x</text><text x="769.6" y="617.3" font-size="16" style="" textLength="9.4" lengthAdjust="spacingAndGlyphs">+</text><text x="783.4" y="617.3" font-size="16" style="font-style:italic;" textLength="6.7" lengthAdjust="spacingAndGlyphs">b</text><text x="791.3" y="620.8" font-size="11" stroke-width="0.08" style="font-style:italic;" textLength="6.7" lengthAdjust="spacingAndGlyphs">n</text><text x="801.0" y="617.3" font-size="16" style="" textLength="17.5" lengthAdjust="spacingAndGlyphs">sin</text><text x="821.4" y="606.3" font-size="16" style="font-style:italic;" textLength="26.4" lengthAdjust="spacingAndGlyphs">n&#960;x</text><path d="M849.2,600.7 Q859.8399999999999,620.35 849.2,640 L849.5,640.1 Q854.24,620.35 849.5,600.6 Z" fill="#111"/><rect x="738" y="614" width="27.8" height="1" fill="#000"/><rect x="820" y="614" width="27.8" height="1" fill="#000"/><text x="748.0" y="628.0" font-size="12" stroke-width="0.08" style="font-style:italic;">L</text><text x="830.0" y="628.0" font-size="12" stroke-width="0.08" style="font-style:italic;">L</text></g></svg>
<div style="position:absolute;left:577px;top:623px;width:409px;height:1px;background:#e1e1e1"></div>
<div style="position:absolute;left:577px;top:649px;width:408px;height:24px;background:#c5c5c5"></div>
<div class="t" style="left:610.8px;top:630.8px;font-size:12px;line-height:13.80px;letter-spacing:0.019px;color:#333;transform:scaleX(1.0000);transform-origin:0 0;"><u>M</u>ore Equations from Office.com</div>
<div class="t" style="left:610.5px;top:655.0px;font-size:12px;line-height:13.80px;letter-spacing:0.000px;color:#333;transform:scaleX(0.9763);transform-origin:0 0;"><u>I</u>nsert New Equation</div>
<div class="t" style="left:610.5px;top:678.8px;font-size:12px;line-height:13.80px;letter-spacing:0.000px;color:#333;transform:scaleX(0.9743);transform-origin:0 0;">In<u>k</u> Equation</div>
<div class="t" style="left:610.5px;top:703.0px;font-size:12px;line-height:13.80px;letter-spacing:0.000px;color:#a6a6a6;transform:scaleX(0.9581);transform-origin:0 0;"><u>S</u>ave Selection to Equation Gallery...</div>
<svg style="position:absolute;left:969px;top:630px;" width="10" height="12" viewBox="0 0 10 12"><polygon points="3,1.5 7.5,6 3,10.5" fill="#666"/></svg>
<svg style="position:absolute;left:580px;top:627px;" width="20" height="20" viewBox="0 0 20 20"><path d="M2.5,12 V2.5 H17.5 V6" fill="none" stroke="#6e6e6e" stroke-width="1.1"/><rect x="4" y="4.5" width="12" height="1.2" fill="#c0c0c0"/><circle cx="11.8" cy="12.5" r="5.8" fill="#fff" stroke="#3d72b8" stroke-width="1.1"/><ellipse cx="11.8" cy="12.5" rx="2.4" ry="5.8" fill="none" stroke="#3d72b8" stroke-width=".9"/><line x1="6" y1="12.5" x2="17.6" y2="12.5" stroke="#3d72b8" stroke-width=".9"/><path d="M3.5,13.5 Q5,18.5 10,17 Q13,16 14.5,12.5" fill="none" stroke="#e8541e" stroke-width="1.8"/><path d="M12.5,11.5 L15.5,10.5 L15.8,14" fill="#e8541e"/></svg>
<svg style="position:absolute;left:0;top:0" width="991" height="723"><path transform="translate(579.8,652.8) scale(0.47,0.46)" d="M7.4,12.6 C8.5,8 10.5,5.2 14,5.2 H32.1 V8.7 H26 V23.4 C26,26 27,27 28.5,27 C30,27 31.2,24 32.1,20.4 L32.8,20.6 C32.2,25 30.5,28.2 27.5,28.2 C24,28.2 22.1,26 22.1,22 V8.7 H18.7 C18,16 16,22 13.3,26 C12.5,27.3 11.5,28 10.5,28 C9.5,28 9,27.2 9,26.2 C9,24.5 11,22.5 12.5,19.5 C14,16.5 15,12 15.2,8.7 H14.3 C11.3,8.7 9.5,10 8.2,12.8 Z" fill="#3d72b8"/></svg>
<svg style="position:absolute;left:581px;top:677px;" width="18" height="16" viewBox="0 0 18 16"><rect x="1.5" y="1.5" width="15" height="13" fill="#fff" stroke="#6e6e6e" stroke-width="1.2"/><rect x="3.5" y="5" width="10" height="7" fill="none" stroke="#a9c4e8" stroke-width=".8"/><path d="M4,8.5 L5.5,11 L7.5,6.5" fill="none" stroke="#5a8ed0" stroke-width="1"/><path d="M6.5,12.5 L7.3,10 L15.2,2 L16.8,3.6 L8.8,11.5 Z" fill="#3a3a3a"/></svg>
<svg style="position:absolute;left:581px;top:700px;" width="20" height="20" viewBox="0 0 20 20"><path d="M2,1.5 H10.5 V11 H2 Z M4.5,1.5 V5 H8.5 V1.5" fill="none" stroke="#c0c0c0" stroke-width="1.8"/><text x="7" y="17.5" font-family="Liberation Serif" font-style="italic" font-size="16" fill="#c0c0c0" stroke="#c0c0c0" stroke-width="0.4">&#960;</text></svg>
<div class="t" style="left:9.7px;top:704.9px;font-size:11.5px;line-height:13.22px;letter-spacing:0.000px;color:#444;transform:scaleX(0.9503);transform-origin:0 0;">Page 1 of 1</div>
<div class="t" style="left:90.8px;top:704.9px;font-size:11.5px;line-height:13.22px;letter-spacing:0.189px;color:#444;transform:scaleX(1.0000);transform-origin:0 0;">0 words</div>
<div class="t" style="left:151.4px;top:704.9px;font-size:11.5px;line-height:13.22px;letter-spacing:0.000px;color:#444;transform:scaleX(0.9778);transform-origin:0 0;">English (United States)</div>
<div class="t" style="left:335.5px;top:704.9px;font-size:11.5px;line-height:13.22px;letter-spacing:0.053px;color:#444;transform:scaleX(1.0000);transform-origin:0 0;">Accessibility: Good to go</div>
<svg style="position:absolute;left:284px;top:702px;" width="18" height="18" viewBox="0 0 18 18"><circle cx="4.9" cy="5.2" r="2.8" fill="#555"/><path d="M3.5,9 V14.2 H14.5 V3.5 H9" fill="none" stroke="#555" stroke-width="1.4"/><rect x="9" y="3" width="6" height="2.5" fill="#555"/><g fill="#555"><rect x="5" y="8" width="2" height="1"/><rect x="8.5" y="8" width="2" height="1"/><rect x="11.5" y="8" width="2" height="1"/><rect x="5" y="11" width="2" height="1"/><rect x="8.5" y="11" width="2" height="1"/><rect x="11.5" y="11" width="2" height="1"/></g></svg>
<svg style="position:absolute;left:315px;top:702px;" width="20" height="18" viewBox="0 0 20 18"><path d="M5,2.3 A5.5,5.5 0 0 0 7,14.5" fill="none" stroke="#444" stroke-width="1.3" stroke-dasharray="3,1.5"/><path d="M8.6,2 V8.5 M6.6,6.5 L8.6,8.5 L10.6,6.5 M8.6,7.2 H15 M13,5.2 L15,7.2 L13,9.2" fill="none" stroke="#444" stroke-width="1.2"/><path d="M10.2,12.5 L13,15.8 L17.8,9.5" fill="none" stroke="#444" stroke-width="1.6"/></svg>
<svg style="position:absolute;left:0;top:0" width="991" height="723"><polygon points="798.6,204.6 858.2,210.8 858.6,206.6 880.3,217.7 856.1,222.2 857,214.8 798.6,208.6" fill="#e8375a"/><polygon points="507.3,664 555.5,660.5 554.5,655.9 578.1,662 554.5,671.8 555.5,666.5 507.3,668.4" fill="#e8375a"/></svg>
<svg style="position:absolute;left:0;top:0" width="991" height="723"><g fill="#fff" stroke="#ee3340" stroke-width="2.8" stroke-linejoin="round"><path d="M812.1,214.6 H818.35 V241.35 H811.45 V225.3 L806,227.4 L805.6,221.5 Q809.5,219.5 812.1,214.6 Z"/><path d="M512.9,640 C512.9,634 517,630.7 522,630.7 C527.5,630.7 530.9,634 530.9,638.3 C530.9,641.5 529,643.8 526.5,646.2 L523.6,649 H531 V657.4 H512.8 V651.2 L520.6,643.3 C522.3,641.5 523.2,640.3 523.2,638.8 C523.2,637.3 522.4,636.6 521.3,636.6 C520,636.6 519.3,637.8 519.3,640 Z"/></g></svg>
<div style="position:absolute;left:0px;top:0px;width:1px;height:723px;background:#2b579a"></div>
<div style="position:absolute;left:990px;top:0px;width:1px;height:723px;background:#2b579a"></div>
<div style="position:absolute;left:0px;top:722px;width:991px;height:1px;background:#2b579a"></div>
</body></html>
